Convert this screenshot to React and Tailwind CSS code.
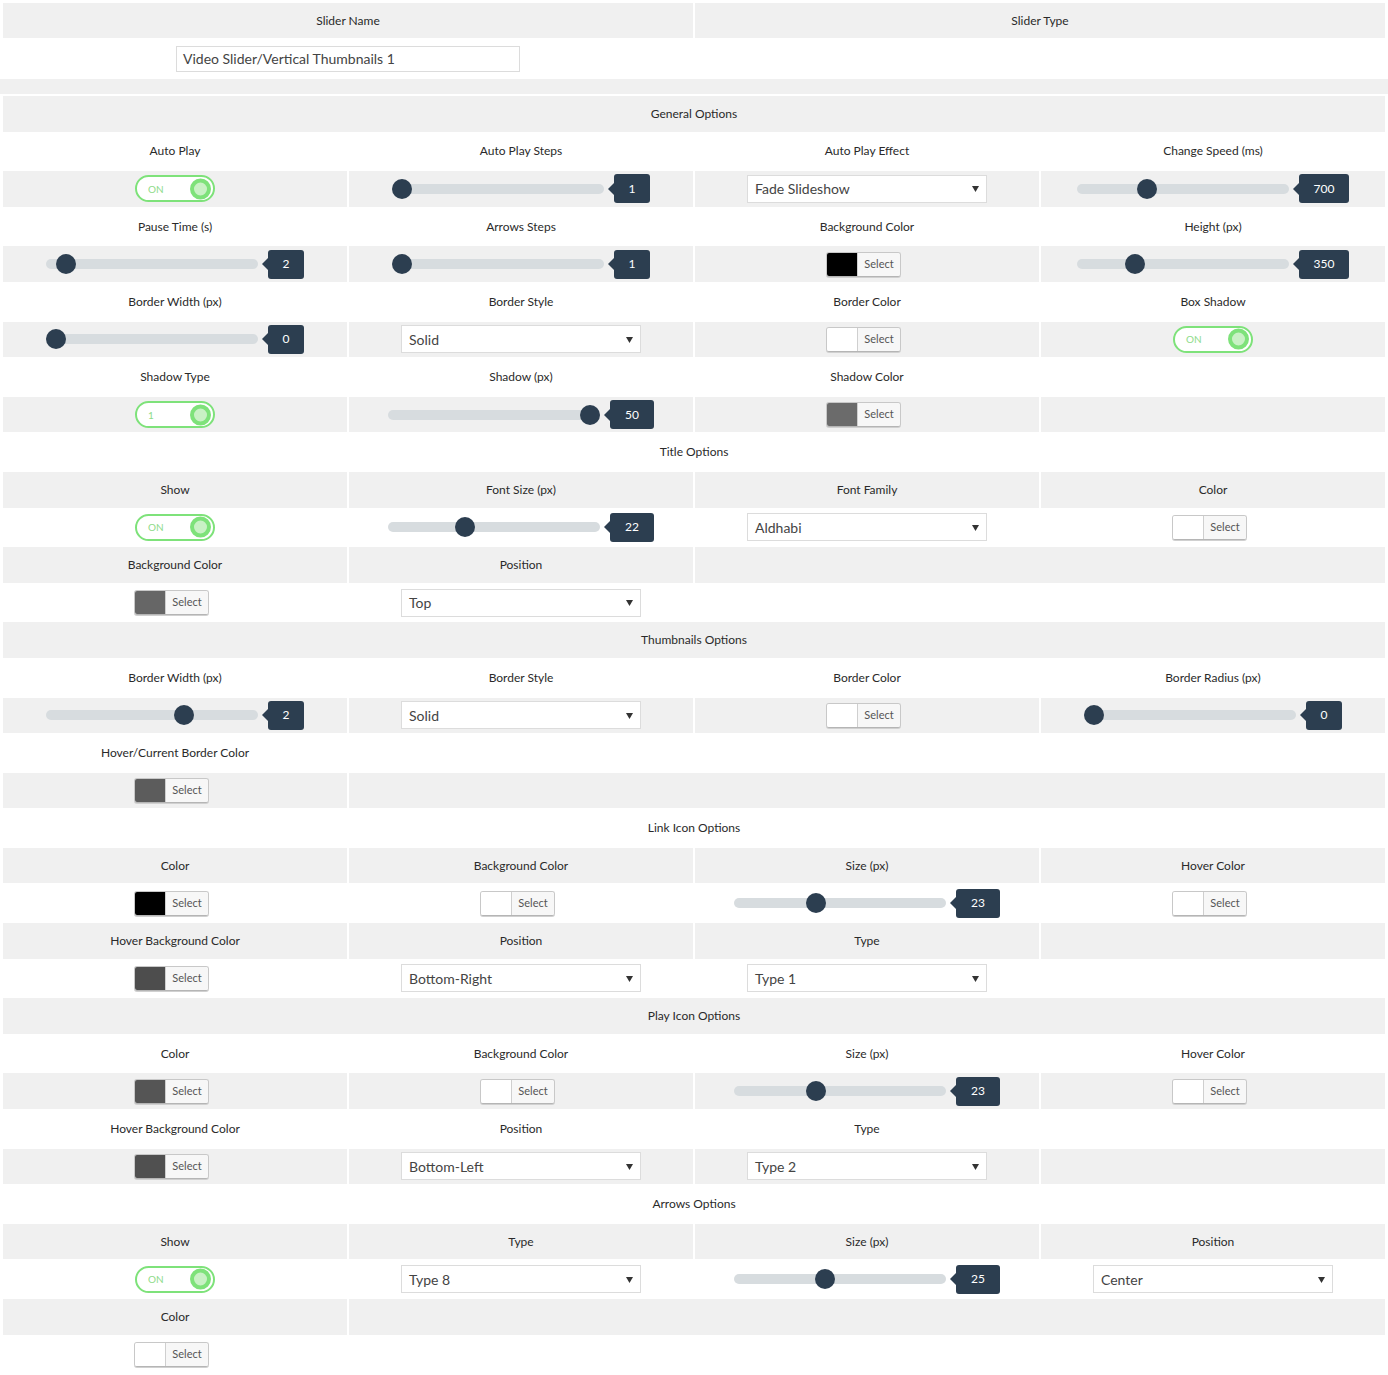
import React from "react";

const GRAY = "bg-[#f0f0f0]";

function Toggle({ text = "ON" }) {
  return (
    <div className="relative w-[80px] h-[27px] rounded-full border-2 border-[#7ee27a] bg-white">
      <span className="absolute left-[11px] top-1/2 -translate-y-1/2 text-[10px] leading-none text-[#8edb89]">
        {text}
      </span>
      <span className="absolute right-[2px] top-1/2 -translate-y-1/2 w-[21px] h-[21px] rounded-full border-[4px] border-[#7ee27a] bg-[#c9f1c5]" />
    </div>
  );
}

function Slider({ pos, value }) {
  return (
    <div className="flex items-center">
      <div className="relative w-[212px] h-[10px] rounded-full bg-[#d7dcdf]">
        <span
          className="absolute top-1/2 -translate-y-1/2 w-[20px] h-[20px] rounded-full bg-[#2c3e50]"
          style={{ left: pos - 10 }}
        />
      </div>
      <div className="relative ml-[10px] h-[29px] px-[15px] flex items-center rounded-[3px] bg-[#2c3e50] text-white text-[12px]">
        <span className="absolute left-[-6px] top-1/2 -translate-y-1/2 w-0 h-0 border-y-[6px] border-y-transparent border-r-[6px] border-r-[#2c3e50]" />
        {value}
      </div>
    </div>
  );
}

function Select({ value }) {
  return (
    <div className="w-[240px] h-[28px] border border-[#dcdcdc] bg-white flex items-center justify-between pl-[7px] pr-[7px] text-[14px] text-[#444]">
      <span>{value}</span>
      <svg width="7" height="7" viewBox="0 0 7 7">
        <path d="M0 1 L7 1 L3.5 7 Z" fill="#333" />
      </svg>
    </div>
  );
}

function Color({ color }) {
  return (
    <div className="inline-flex mr-[7px] h-[25px] rounded-[3px] border border-[#c8c8c8] border-b-[#b5b5b5] overflow-hidden shadow-[0_1px_0_#d0d0d0]">
      <span className="w-[30px] h-full" style={{ background: color }} />
      <span className="flex items-center px-[6px] bg-[#f7f7f7] border-l border-[#cfcfcf] text-[11px] text-[#555]">
        Select
      </span>
    </div>
  );
}

const SPAN = { 1: "col-span-1", 2: "col-span-2", 3: "col-span-3", 4: "col-span-4" };

const rows = [
  { h: "General Options" },
  ["Auto Play", "Auto Play Steps", "Auto Play Effect", "Change Speed (ms)"],
  [<Toggle />, <Slider pos={10} value="1" />, <Select value="Fade Slideshow" />, <Slider pos={70} value="700" />],
  ["Pause Time (s)", "Arrows Steps", "Background Color", "Height (px)"],
  [<Slider pos={20} value="2" />, <Slider pos={10} value="1" />, <Color color="#000000" />, <Slider pos={58} value="350" />],
  ["Border Width (px)", "Border Style", "Border Color", "Box Shadow"],
  [<Slider pos={10} value="0" />, <Select value="Solid" />, <Color color="#ffffff" />, <Toggle />],
  ["Shadow Type", "Shadow (px)", "Shadow Color", ""],
  [<Toggle text="1" />, <Slider pos={202} value="50" />, <Color color="#6b6b6b" />, ""],
  { h: "Title Options" },
  ["Show", "Font Size (px)", "Font Family", "Color"],
  [<Toggle />, <Slider pos={77} value="22" />, <Select value="Aldhabi" />, <Color color="#ffffff" />],
  ["Background Color", "Position", { span: 2, c: "" }],
  [<Color color="#666666" />, <Select value="Top" />, { span: 2, c: "" }],
  { h: "Thumbnails Options" },
  ["Border Width (px)", "Border Style", "Border Color", "Border Radius (px)"],
  [<Slider pos={138} value="2" />, <Select value="Solid" />, <Color color="#ffffff" />, <Slider pos={10} value="0" />],
  ["Hover/Current Border Color", { span: 3, c: "" }],
  [<Color color="#5c5c5c" />, { span: 3, c: "" }],
  { h: "Link Icon Options" },
  ["Color", "Background Color", "Size (px)", "Hover Color"],
  [<Color color="#000000" />, <Color color="#ffffff" />, <Slider pos={82} value="23" />, <Color color="#ffffff" />],
  ["Hover Background Color", "Position", "Type", ""],
  [<Color color="#4d4d4d" />, <Select value="Bottom-Right" />, <Select value="Type 1" />, ""],
  { h: "Play Icon Options" },
  ["Color", "Background Color", "Size (px)", "Hover Color"],
  [<Color color="#555555" />, <Color color="#ffffff" />, <Slider pos={82} value="23" />, <Color color="#ffffff" />],
  ["Hover Background Color", "Position", "Type", ""],
  [<Color color="#505050" />, <Select value="Bottom-Left" />, <Select value="Type 2" />, ""],
  { h: "Arrows Options" },
  ["Show", "Type", "Size (px)", "Position"],
  [<Toggle />, <Select value="Type 8" />, <Slider pos={91} value="25" />, <Select value="Center" />],
  ["Color", { span: 3, c: "" }],
  [<Color color="#ffffff" />, { span: 3, c: "" }],
];

export default function App() {
  return (
    <div className="min-h-[1375px] bg-white text-[12px] text-[#2a2a2a] font-['Lato','Liberation_Sans',sans-serif]">
      <div className="grid grid-cols-2 gap-[2px] px-[3px] pt-[3px]">
        <div className={`${GRAY} h-[35px] flex items-center justify-center`}>Slider Name</div>
        <div className={`${GRAY} h-[35px] flex items-center justify-center`}>Slider Type</div>
        <div className="h-[37px] flex items-center justify-center">
          <div className="w-[344px] h-[26px] border border-[#dcdcdc] bg-white flex items-center pl-[6px] text-[14px] text-[#444]">
            Video Slider/Vertical Thumbnails 1
          </div>
        </div>
        <div className="h-[37px]" />
      </div>
      <div className={`mt-[2px] h-[15px] ${GRAY}`} />
      <div className="grid grid-cols-4 auto-rows-[35.6px] gap-[2px] px-[3px] pt-[2px]">
        {rows.map((row, i) => {
          const bg = i % 2 === 0 ? GRAY : "bg-white";
          if (!Array.isArray(row)) {
            return (
              <div key={i} className={`col-span-4 ${bg} flex items-center justify-center`}>
                {row.h}
              </div>
            );
          }
          return row.map((cell, j) => {
            let span = 1;
            let c = cell;
            if (cell && typeof cell === "object" && !React.isValidElement(cell)) {
              span = cell.span;
              c = cell.c;
            }
            return (
              <div key={`${i}-${j}`} className={`${SPAN[span]} ${bg} flex items-center justify-center`}>
                {c}
              </div>
            );
          });
        })}
      </div>
    </div>
  );
}
